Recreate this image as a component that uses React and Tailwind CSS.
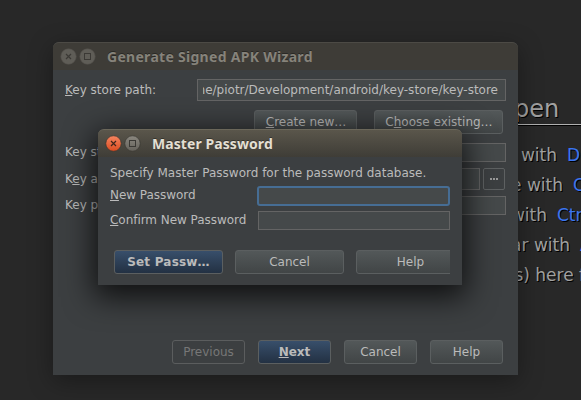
const sans = "font-['DejaVu_Sans','Noto_Sans',sans-serif]";

function Mnemonic({ children }) {
  return <span className="underline decoration-1 underline-offset-[1px] [text-decoration-skip-ink:none]">{children}</span>;
}

function Label({ children, className = '' }) {
  return (
    <div className={`whitespace-nowrap text-[12px] leading-[14px] text-[#bbbbbb] ${className}`}>
      {children}
    </div>
  );
}

const kinds = {
  normal: 'border-[#5b5f60] bg-linear-to-b from-[#535859] to-[#414546] text-[#bbbbbb]',
  primary: 'border-[#5b5f60] bg-linear-to-b from-[#384f6b] to-[#233143] text-[#bbbbbb] font-bold',
  disabled: 'border-[#5b5d5e] text-[#777777]',
};

function Button({ kind = 'normal', className = '', children }) {
  return (
    <div className={`flex h-[24px] shrink-0 items-center justify-center whitespace-nowrap rounded-[3px] border text-[12px] leading-[14px] ${kinds[kind]} ${className}`}>
      <span>{children}</span>
    </div>
  );
}

function Field({ className = '', children }) {
  return <div className={`border border-[#646464] bg-[#45494a] ${className}`}>{children}</div>;
}

function TitleBar({ active, title, className }) {
  return (
    <div className={`flex h-[28px] items-center rounded-t-[6px] border-t pl-[7px] ${active ? 'border-[#6b675a] bg-linear-to-b from-[#5a564b] to-[#3f3d37]' : 'border-[#4c4a45] bg-[#3e3c37]'}`}>
      <svg width="36" height="18" viewBox="0 0 36 18" className="shrink-0">
        <defs>
          <linearGradient id="close" x1="0" y1="0" x2="0" y2="1">
            <stop offset="0" stopColor="#f58560" />
            <stop offset="1" stopColor="#dc4c20" />
          </linearGradient>
          <linearGradient id="max" x1="0" y1="0" x2="0" y2="1">
            <stop offset="0" stopColor="#8a877f" />
            <stop offset="1" stopColor="#65625b" />
          </linearGradient>
        </defs>
        <circle cx="8.5" cy="8.5" r="7.7" fill={active ? 'url(#close)' : '#5f5d57'} stroke={active ? '#34322d' : '#55534e'} strokeWidth="0.6" />
        <path d="M6 6l5 5M11 6l-5 5" stroke={active ? '#40261c' : '#3b3935'} strokeWidth="1.2" />
        <circle cx="27.5" cy="8.5" r="7.7" fill={active ? 'url(#max)' : '#5f5d57'} stroke={active ? '#34322d' : '#55534e'} strokeWidth="0.6" />
        <rect x="24.5" y="5.5" width="6" height="6" fill="none" stroke="#3b3935" strokeWidth="1" />
      </svg>
      <div className={className}>{title}</div>
    </div>
  );
}

const titleFont = "whitespace-nowrap font-['Noto_Sans','Open_Sans',sans-serif] font-bold text-[14px] leading-[18px] [text-shadow:0_-1px_0_rgba(0,0,0,0.35)]";

function HintRow({ left, right, width }) {
  return (
    <div className="flex h-[30px] items-center whitespace-pre text-[17px] leading-[20px]">
      <div className={`flex shrink-0 justify-end ${width}`}>{left}</div>
      <div className="pl-[10px] text-[#3b75f0]">{right}</div>
    </div>
  );
}

function Hints() {
  return (
    <div className="pt-[93px] text-[#a0a0a0] [text-shadow:1px_1px_0_#000]">
      <div className="ml-[500px] h-[32px] whitespace-nowrap border-b border-[#b0b0b0] pl-[14px] text-[24px] leading-[32px] shadow-[0_1px_0_#000]">
        pen
      </div>
      <div className="pt-[15px]">
        <HintRow width="w-[557px]" left="with" right="D" />
        <HintRow width="w-[563px]" left="e with" right="C" />
        <HintRow width="w-[547px]" left="with" right="Ctrl" />
        <HintRow width="w-[570px]" left="ar with" right="A" />
        <HintRow width="w-[585px]" left="s) here f" right="" />
      </div>
    </div>
  );
}

function Wizard() {
  return (
    <div className="absolute left-[53px] top-[42px] flex h-[333px] w-[465px] flex-col rounded-t-[6px] bg-[#3c3f41] shadow-[0_6px_24px_rgba(0,0,0,0.35)]">
      <TitleBar title="Generate Signed APK Wizard" className={`${titleFont} pl-[11px] tracking-[0.29px] text-[#86837b]`} />
      <div className="flex flex-1 flex-col pl-[12px] pr-[12px] pt-[9px]">
        <div className="flex h-[22px] items-center">
          <Label className="w-[132px]"><Mnemonic>K</Mnemonic>ey store path:</Label>
          <Field className="flex h-[22px] flex-1 items-center justify-end overflow-hidden pl-[5px] pr-[7px]">
            <div className="flex min-w-0 flex-1 justify-end overflow-hidden whitespace-nowrap text-[12px] leading-[14px] text-[#bbbbbb]">
              <span>me/piotr/Development/android/key-store/key-store</span>
            </div>
          </Field>
        </div>
        <div className="mt-[9px] flex justify-end gap-[17px] pr-[3px]">
          <Button className="w-[103px] pl-px"><Mnemonic>C</Mnemonic>reate new…</Button>
          <Button className="w-[129px] pl-px">C<Mnemonic>h</Mnemonic>oose existing…</Button>
        </div>
        <div className="mt-[9px] flex h-[19px] items-center">
          <Label className="w-[132px] pb-px">Key st</Label>
          <Field className="h-[19px] flex-1" />
        </div>
        <div className="mt-[6px] flex h-[22px] items-center">
          <Label className="w-[132px]">K<Mnemonic>e</Mnemonic>y a</Label>
          <Field className="h-[22px] flex-1" />
          <div className="ml-[3px] mr-px flex h-[22px] w-[22px] items-center justify-center gap-px rounded-[2px] border border-[#5e6162]">
            <i className="size-[2px] bg-[#9a9a9a]" />
            <i className="size-[2px] bg-[#9a9a9a]" />
            <i className="size-[2px] bg-[#9a9a9a]" />
          </div>
        </div>
        <div className="mt-[6px] flex h-[19px] items-center">
          <Label className="w-[132px] pb-px">Key p</Label>
          <Field className="h-[19px] flex-1" />
        </div>
        <div className="mb-[11px] mt-auto flex justify-end gap-[13px] pr-[3px]">
          <Button kind="disabled" className="w-[73px]">Previous</Button>
          <Button kind="primary" className="w-[73px]"><Mnemonic>N</Mnemonic>ext</Button>
          <Button className="w-[73px]">Cancel</Button>
          <Button className="w-[73px]">Help</Button>
        </div>
      </div>
    </div>
  );
}

function PasswordDialog() {
  return (
    <div className="absolute left-[98px] top-[129px] flex h-[156px] w-[364px] flex-col rounded-t-[6px] bg-[#3c3f41] shadow-[0_8px_30px_4px_rgba(0,0,0,0.75)]">
      <TitleBar active title="Master Password" className={`${titleFont} pl-[11px] tracking-[0.08px] text-[#e3dfd3]`} />
      <div className="flex flex-col pl-[12px] pr-[12px] pt-[9px]">
        <Label>Specify Master Password for the password database.</Label>
        <div className="mt-[6px] flex h-[19px] items-center">
          <Label className="w-[148px] pb-px tracking-[-0.04px]"><Mnemonic>N</Mnemonic>ew Password</Label>
          <div className="-my-px -ml-px h-[20px] flex-1 rounded-[3px] border-2 border-[#466d94] bg-[#45494a]" />
        </div>
        <div className="mt-[6px] flex h-[19px] items-center">
          <Label className="w-[148px] pb-px tracking-[-0.04px]"><Mnemonic>C</Mnemonic>onfirm New Password</Label>
          <Field className="h-[19px] flex-1" />
        </div>
        <div className="mt-[20px] flex gap-[12px] overflow-hidden pl-[4px]">
          <Button kind="primary" className="w-[109px] tracking-[0.2px]">Set Passw…</Button>
          <Button className="w-[109px]">Cancel</Button>
          <Button className="w-[109px]">Help</Button>
        </div>
      </div>
    </div>
  );
}

export default function App() {
  return (
    <div className={`relative h-[400px] w-[581px] overflow-hidden bg-[#282828] ${sans}`}>
      <Hints />
      <Wizard />
      <PasswordDialog />
    </div>
  );
}
